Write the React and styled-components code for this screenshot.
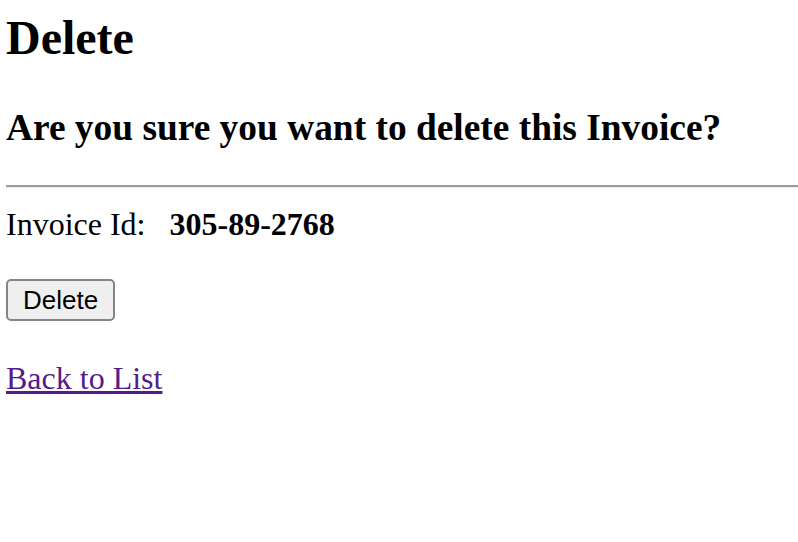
import React from "react";
import styled, { createGlobalStyle } from "styled-components";

const Global = createGlobalStyle`
  html, body { margin: 0; padding: 0; background: #ffffff; }
  body {
    font-family: "Liberation Serif", "Times New Roman", serif;
    color: #000000;
  }
`;

const Page = styled.main`
  display: flex;
  flex-direction: column;
  align-items: flex-start;
  padding: 0 0 0 6px;
`;

const Title = styled.h1`
  font-size: 48px;
  font-weight: 700;
  line-height: 1.15;
  margin: 9.5px 0 0;
`;

const Question = styled.h2`
  font-size: 37.4px;
  font-weight: 700;
  line-height: 1.15;
  margin: 41.5px 0 0;
`;

const Rule = styled.hr`
  align-self: stretch;
  height: 0;
  margin: 36px 0 0;
  border: none;
  border-top: 2px solid #9b9b9b;
  border-bottom: 1px solid #ececec;
`;

const Details = styled.dl`
  display: flex;
  gap: 24px;
  margin: 17.3px 0 0;
  font-size: 32px;
  line-height: 1.15;
`;

const Term = styled.dt`
  margin: 0;
  font-weight: 400;
`;

const Value = styled.dd`
  margin: 0;
  font-weight: 700;
`;

const DeleteButton = styled.button`
  box-sizing: border-box;
  height: 42px;
  margin: 37.2px 0 0;
  padding: 4px 15px 4px;
  font-family: "Liberation Sans", Arial, sans-serif;
  font-size: 26px;
  line-height: 30px;
  color: #000000;
  background: #efefef;
  border: 2px solid #858585;
  border-radius: 5px;
`;

const BackLink = styled.a`
  margin: 38.5px 0 0;
  font-size: 32px;
  line-height: 1.15;
  color: #551a8b;
  text-decoration: underline;
`;

export default function App() {
  return (
    <>
      <Global />
      <Page>
        <Title>Delete</Title>
        <Question>Are you sure you want to delete this Invoice?</Question>
        <Rule />
        <Details>
          <Term>Invoice Id:</Term>
          <Value>305-89-2768</Value>
        </Details>
        <DeleteButton type="button">Delete</DeleteButton>
        <BackLink href="#list">Back to List</BackLink>
      </Page>
    </>
  );
}
